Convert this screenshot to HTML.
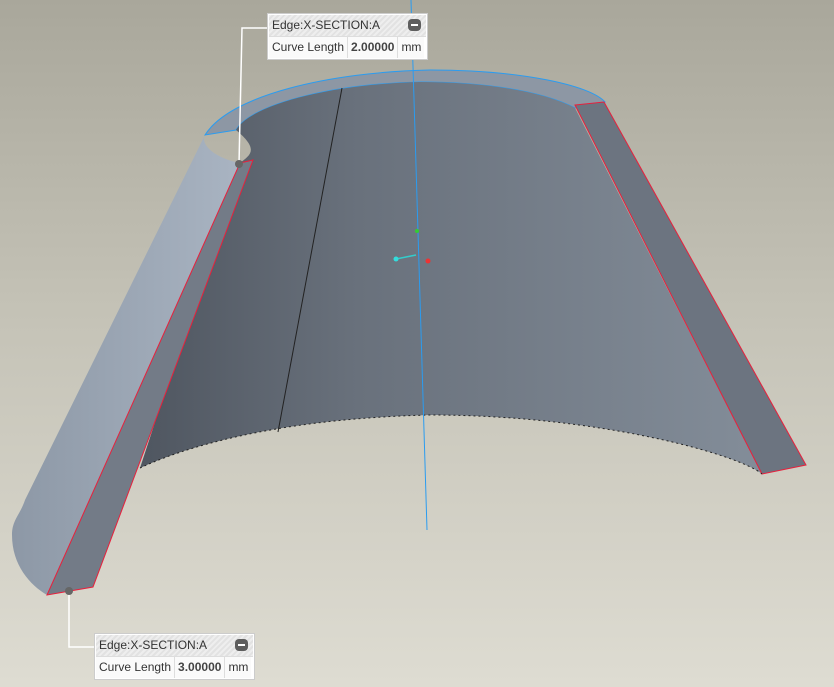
<!DOCTYPE html>
<html style="background:#dedcd2"><head><style>
html,body{margin:0;padding:0}
body{width:834px;height:687px;position:relative;overflow:hidden;background:linear-gradient(#a9a79b,#c4c2b6 45%,#dedcd2)}
.lbl{position:absolute;width:157px;border:1px solid #fff;background:#fff;font-family:"Liberation Sans",sans-serif;font-size:12px;color:#333;box-shadow:0 0 0 1px #ccc;white-space:nowrap;overflow:hidden}
.lbl .h{height:21px;line-height:21px;padding-left:3px;background:repeating-linear-gradient(135deg,#eee 0 2px,#e2e2e2 2px 4px);position:relative;border-bottom:1px solid #ddd}
.lbl .h i{position:absolute;right:5px;top:4px;width:13px;height:12px;border-radius:4px;background:#5e5e5e}
.lbl .h i:after{content:"";position:absolute;left:3px;right:3px;top:5px;height:2px;background:#fff}
.lbl .r{display:flex;height:21px;line-height:21px}
.lbl .r span{padding:0 3px;border-right:1px solid #ddd;background:#fafafa}
.lbl .r span:last-child{border:none}
</style></head><body>
<svg width="834" height="687" style="position:absolute;left:0;top:0">
<defs>
<linearGradient id="inner" x1="0" x2="1" y1="0" y2="0">
<stop offset="0" stop-color="#4f5660"/><stop offset="0.35" stop-color="#69717c"/><stop offset="1" stop-color="#838d99"/></linearGradient>
<linearGradient id="tube" x1="0" x2="1"><stop offset="0" stop-color="#8d98a6"/><stop offset="1" stop-color="#a9b4c2"/></linearGradient>
</defs>
<path d="M205,135 C230,95 330,72 430,70 C520,70 590,85 605,102 L575,108 C540,90 480,82 420,82 C330,84 250,105 236,130 Z" fill="#8d97a4" stroke="#2b9cf0" stroke-width="1"/>
<path d="M236,130 C250,105 330,84 420,82 C480,82 540,90 575,108 L762,474 C740,455 600,415 430,415 C300,418 200,440 140,468 L240,163 C250,155 260,150 236,130 Z" fill="url(#inner)"/>
<line x1="342" y1="88" x2="278" y2="432" stroke="#222" stroke-width="1"/>
<path d="M205,135 C200,145 215,158 240,163 L47,595 C30,585 12,565 12,535 C12,520 20,515 25,500 Z" fill="url(#tube)"/>
<path d="M240,163 L253,160 L93,587 L47,595 Z" fill="#737b87" stroke="#e8203c" stroke-width="1"/>
<path d="M575,105 L604,102 L806,465 L762,474 Z" fill="#6c7480" stroke="#e8203c" stroke-width="1"/>
<path d="M140,468 C200,440 300,418 430,415 C600,415 740,455 762,474" fill="none" stroke="#222" stroke-width="1" stroke-dasharray="2 3"/>
<line x1="411" y1="0" x2="427" y2="530" stroke="#2b9cf0" stroke-width="1"/>
<line x1="396" y1="259" x2="416" y2="255" stroke="#3cc" stroke-width="1.5"/>
<circle cx="396" cy="259" r="2.5" fill="#3dd"/><circle cx="417" cy="231" r="2" fill="#3c3"/><circle cx="428" cy="261" r="2.5" fill="#e33"/>
<polyline points="268,28 242,28 239,164" fill="none" stroke="#fff" stroke-width="1.5"/>
<circle cx="239" cy="164" r="4" fill="#666"/>
<polyline points="69,591 69,647 94,647" fill="none" stroke="#fff" stroke-width="1.5"/>
<circle cx="69" cy="591" r="4" fill="#666"/>
</svg>
<div class="lbl" style="left:268px;top:14px"><div class="h">Edge:X-SECTION:A<i></i></div><div class="r"><span>Curve Length</span><span style="font-weight:bold;color:#444">2.00000</span><span>mm</span></div></div>
<div class="lbl" style="left:95px;top:634px"><div class="h">Edge:X-SECTION:A<i></i></div><div class="r"><span>Curve Length</span><span style="font-weight:bold;color:#444">3.00000</span><span>mm</span></div></div>
</body></html>
